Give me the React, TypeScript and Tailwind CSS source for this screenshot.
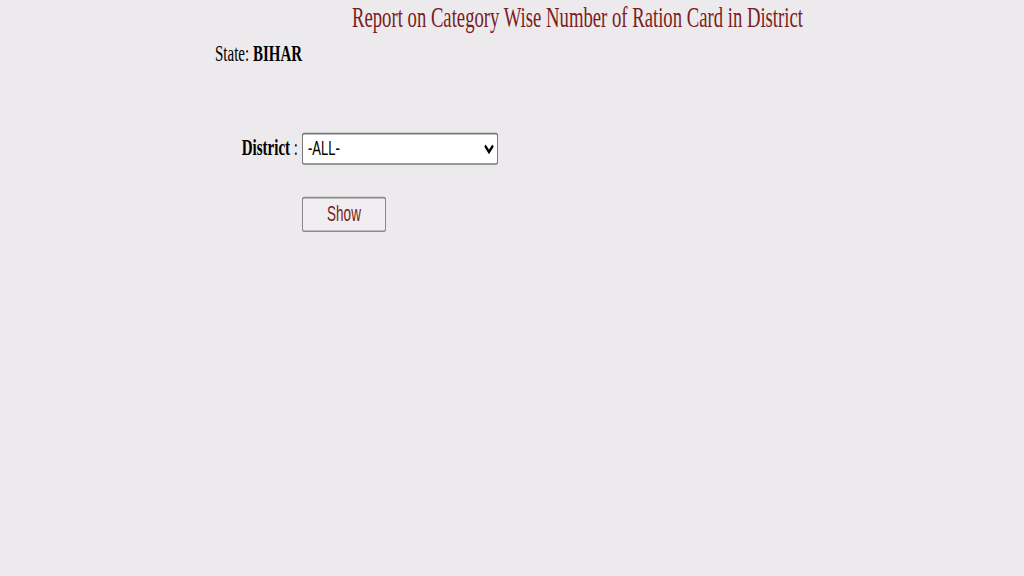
import React from "react";

export default function App() {
  return (
    <div className="w-[1024px] h-[576px] overflow-hidden bg-[#edeaed]">
      <div className="origin-top-left scale-y-[1.6] font-['Liberation_Serif','Times_New_Roman',serif] text-black">
        <h1 className="pl-[352px] text-[18.7px] leading-[22px] font-normal text-[#7a1c22]">
          Report on Category Wise Number of Ration Card in District
        </h1>
        <div className="mt-[3px] pl-[215px] text-[15px] leading-[16.6px]">
          State: <span className="font-bold">BIHAR</span>
        </div>
        <div className="mt-[41px] grid grid-cols-[298px_196px] gap-x-[4px] items-center">
          <label className="text-right text-[15px] leading-[16.6px]">
            <span className="font-bold">District</span> :
          </label>
          <select
            defaultValue="all"
            className="h-[20px] w-[196px] rounded-[2px] border border-[#7a7a7a] bg-white pl-[1px] text-[13px] text-black font-['Liberation_Sans',Arial,sans-serif]"
          >
            <option value="all">-ALL-</option>
          </select>
        </div>
        <div className="mt-[20px] pl-[302px]">
          <button className="flex h-[22.5px] w-[84px] items-center justify-center rounded-[2px] border border-[#8a8a8a] bg-[#f0eef0] text-[13.5px] text-[#7a1c22] font-['Liberation_Sans',Arial,sans-serif]">
            Show
          </button>
        </div>
      </div>
    </div>
  );
}
